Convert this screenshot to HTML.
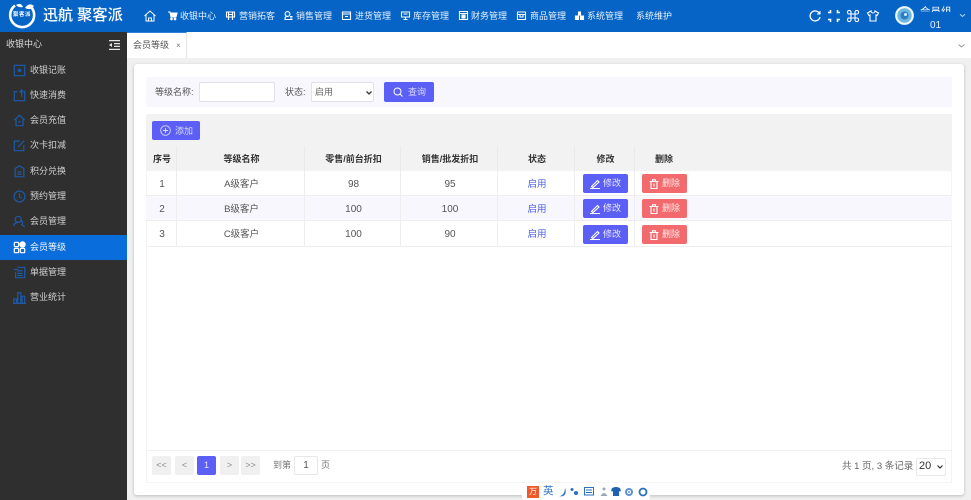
<!DOCTYPE html>
<html lang="zh"><head><meta charset="utf-8"><title>会员等级</title>
<style>
*{box-sizing:border-box}
html,body{margin:0;padding:0;width:971px;height:500px;overflow:hidden;background:#f0f0f0;font-family:"Liberation Sans","Noto Sans CJK SC",sans-serif;color:#444}
#w{position:absolute;left:0;top:0;width:971px;height:500px;overflow:hidden;filter:blur(.35px)}
.a{position:absolute;white-space:nowrap}
svg{position:absolute;overflow:visible;fill:none}
.n{top:10px;font-size:9px;line-height:13px;color:#e8f1fb}
.nav svg{top:11px;width:9px;height:9px;stroke:#fff;stroke-width:1.1}
.s{left:30px;font-size:9px;line-height:13px;color:#d0d0d0}
.sv{left:13px;width:13px;height:13px;stroke:#1c5aa6;stroke-width:1.4}
.th{top:146px;height:25px;background:#f2f2f2;font-size:9px;line-height:26px;color:#333;text-align:center;font-weight:700;border-right:1px solid #e9e9e9;padding-left:2px}
.td{height:25px;font-size:9.500px;line-height:27px;color:#555;text-align:center;border-right:1px solid #eeeeee;border-bottom:1px solid #eeeeee;padding-left:2px}
.num{font-size:10px}
.b{width:45px;height:19px;border-radius:2px;color:#e9e9ff;font-size:9px;line-height:19px;padding-left:19px}
.m{left:583px;background:#5c5ff5}.d{left:642px;background:#f26a6d;color:#ffe9e9}
.b svg{left:7px;top:5px;width:10px;height:10px;stroke:#fff;stroke-width:1.1}
.p{top:456px;width:19px;height:19px;background:#f0f0f0;border-radius:2px;color:#8a8a8a;font-size:9px;line-height:19px;text-align:center}
</style></head><body><div id="w">

<!-- Top bar -->
<div class="a" style="left:0;top:0;width:971px;height:32px;background:#0564c6"></div>
<svg style="left:8px;top:2px;width:28px;height:27px" viewBox="0 0 28 27"><path d="M7 3.500A12 12 0 1 0 23 5" stroke="#fff" stroke-width="2.600"/><path d="M8 3q5-3 7 2-4 1-7-2zM17 6q4-6 9-2-3 5-9 2z" fill="#fff"/></svg>
<div class="a" style="left:13px;top:11px;font-size:5.500px;line-height:9px;color:#fff;letter-spacing:.5px;font-weight:700">聚客派</div>
<div class="a" style="left:43px;top:6px;font-size:15px;line-height:20px;color:#fff;font-weight:500">迅航</div>
<div class="a" style="left:77px;top:6px;font-size:15.300px;line-height:20px;color:#fff;font-weight:500">聚客派</div>

<div class="nav">
<svg style="left:144px;top:10px;width:12px;height:12px;stroke:#fff;stroke-width:1" viewBox="0 0 12 12"><path d="M0.500 6L6 1l5.500 5M2 5v6h8V5M4.500 11V8h3v3"/></svg>
<svg style="left:168px" viewBox="0 0 9 9"><path d="M0 1h2l1 5h5l1-4H2.500" fill="#fff"/><circle cx="3.500" cy="8" r=".8" fill="#fff"/><circle cx="7" cy="8" r=".8" fill="#fff"/></svg>
<div class="a n" style="left:180px">收银中心</div>
<svg style="left:226px" viewBox="0 0 9 9"><path d="M.5 1h8v5h-8zM2.500 1v8M6.500 1v8M2.500 3.500h4"/></svg>
<div class="a n" style="left:239px">营销拓客</div>
<svg style="left:284px" viewBox="0 0 9 9"><circle cx="3.500" cy="3" r="2.400"/><path d="M.5 8.500h8M6 5.500h2.500M6 7h2.500M1 8c0-2 1-2.800 2.500-2.800"/></svg>
<div class="a n" style="left:296px">销售管理</div>
<svg style="left:342px" viewBox="0 0 9 9"><path d="M.5 1h8v7.500h-8zM.5 3h8M3 5.500h3"/></svg>
<div class="a n" style="left:355px">进货管理</div>
<svg style="left:401px" viewBox="0 0 9 9"><path d="M.5 1h8v5h-8zM4.500 6v2.500M2.500 8.500h4M2.500 3h4"/></svg>
<div class="a n" style="left:413px">库存管理</div>
<svg style="left:459px" viewBox="0 0 9 9"><path d="M.5.500h8v8h-8zM.5 2.500h8"/><rect x="3" y="4" width="3" height="3" fill="#fff"/></svg>
<div class="a n" style="left:471px">财务管理</div>
<svg style="left:517px" viewBox="0 0 9 9"><path d="M.5 1h8v7.500h-8zM.5 3.500h8M3 3.500v2.500h3V3.500"/></svg>
<div class="a n" style="left:530px">商品管理</div>
<svg style="left:575px" viewBox="0 0 9 9"><path d="M3.500 1h2v3h-2zM.5 5h3v3.500h-3zM5.500 5h3v3.500h-3z" fill="#fff"/></svg>
<div class="a n" style="left:587px">系统管理</div>
<div class="a n" style="left:636px">系统维护</div>
</div>

<svg style="left:809px;top:10px;width:12px;height:12px;stroke:#fff;stroke-width:1.300" viewBox="0 0 12 12"><path d="M10.500 3.500A5 5 0 1 0 11 7"/><path d="M11 1v3H8" stroke-width="1"/></svg>
<svg style="left:828px;top:10px;width:12px;height:12px;stroke:#fff;stroke-width:1.600" viewBox="0 0 12 12"><path d="M0 2.500h2.500V0M9.500 0v2.500H12M12 9.500H9.500V12M2.500 12V9.500H0" transform="rotate(0 6 6)"/></svg>
<svg style="left:847px;top:10px;width:12px;height:12px;stroke:#fff;stroke-width:1.100" viewBox="0 0 12 12"><path d="M4 4h4v4H4zM4 4H2.200A1.800 1.800 0 1 1 4 2.200zM8 4V2.200A1.800 1.800 0 1 1 9.800 4zM8 8h1.800A1.800 1.800 0 1 1 8 9.800zM4 8v1.800A1.800 1.800 0 1 1 2.200 8z"/></svg>
<svg style="left:867px;top:10px;width:12px;height:12px;stroke:#fff;stroke-width:1.100" viewBox="0 0 12 12"><path d="M4 1L.5 3l1.500 2.500L3 5v6h6V5l1 .5L11.500 3 8 1a2 2 0 0 1-4 0z"/></svg>
<svg style="left:895px;top:6px;width:19px;height:19px" viewBox="0 0 19 19"><circle cx="9.500" cy="9.500" r="8.300" fill="#6db6e0" stroke="#eef7fc" stroke-width="2.200"/><circle cx="9.500" cy="9.500" r="4" fill="#2a7fc4"/><circle cx="10.500" cy="8.500" r="1.500" fill="#d9eef9"/></svg>
<div class="a" style="left:920px;top:4px;width:32px;height:8px;overflow:hidden;font-size:10.500px;line-height:16px;color:#fff">会员组</div>
<div class="a" style="left:930px;top:20px;font-size:10px;line-height:12px;color:#e8f1fb;height:8px;overflow:hidden">01</div>
<svg style="left:960px;top:14px;width:5px;height:3px;stroke:#bcd9f4;stroke-width:1" viewBox="0 0 5 3"><path d="M0 .3L2.500 2.500 5 .3"/></svg>

<!-- Sidebar -->
<div class="a" style="left:0;top:32px;width:127px;height:468px;background:#2f2f2f"></div>
<div class="a" style="left:6px;top:38px;font-size:9px;line-height:13px;color:#ddd">收银中心</div>
<svg style="left:109px;top:40px;width:11px;height:10px;stroke:#e4e4e4;stroke-width:1.200" viewBox="0 0 11 10"><path d="M0 .6h11M5 3.600h6M5 6.400h6M0 9.400h11"/><path d="M3 3L0 5l3 2z" fill="#e4e4e4" stroke="none"/></svg>

<div class="a" style="left:0;top:235px;width:127px;height:25px;background:#0a6ddc"></div>

<svg class="sv" style="top:64px" viewBox="0 0 15 15"><rect x="1.500" y="1.500" width="12" height="12"/><rect x="5.500" y="5.500" width="4" height="3.500" fill="#1c5aa6" stroke="none"/></svg>
<div class="a s" style="top:64px">收银记账</div>
<svg class="sv" style="top:89px" viewBox="0 0 15 15"><path d="M5 3H1.500v10.500h12V2M10 1v8M7.500 4L10 1l2 3"/></svg>
<div class="a s" style="top:89px">快速消费</div>
<svg class="sv" style="top:114px" viewBox="0 0 15 15"><path d="M1.500 7L7.500 1.500 13.500 7M3.500 6v7.500h8V6M6 9h3"/></svg>
<div class="a s" style="top:114px">会员充值</div>
<svg class="sv" style="top:139px" viewBox="0 0 15 15"><path d="M8 2.500H1.500v11h11V7M6 9l7-7"/></svg>
<div class="a s" style="top:139px">次卡扣减</div>
<svg class="sv" style="top:165px" viewBox="0 0 15 15"><path d="M7.500 1l5 3v9.500h-10V4zM5 8h5M5 10.500h5"/></svg>
<div class="a s" style="top:165px">积分兑换</div>
<svg class="sv" style="top:190px" viewBox="0 0 15 15"><circle cx="7.500" cy="7.500" r="6.300"/><path d="M7.500 4v4l2.500 1.500"/></svg>
<div class="a s" style="top:190px">预约管理</div>
<svg class="sv" style="top:215px" viewBox="0 0 15 15"><circle cx="6" cy="5" r="3.500"/><path d="M1 13c0-3 2-4.500 5-4.500M9 6a3 3 0 0 1 1 5l3.500 2.500"/></svg>
<div class="a s" style="top:215px">会员管理</div>
<svg class="sv" style="top:241px;stroke:#fff" viewBox="0 0 15 15"><rect x="1.500" y="1.500" width="5" height="5" rx="1"/><circle cx="11" cy="4" r="3" fill="#fff"/><rect x="1.500" y="8.500" width="5" height="5" rx="1"/><rect x="8.500" y="8.500" width="5" height="5" rx="1"/></svg>
<div class="a s" style="top:241px;color:#f2f7ff">会员等级</div>
<svg class="sv" style="top:266px" viewBox="0 0 15 15"><path d="M5 1.500h8.500v12H3V7M1 4h5M5 5.500h6M5 8.500h6M5 11h6"/></svg>
<div class="a s" style="top:266px">单据管理</div>
<svg class="sv" style="top:291px" viewBox="0 0 15 15"><path d="M1 14V9h3v5M5.500 14V2h3.500v12M10.500 14V6h3v8M0 14.300h15"/></svg>
<div class="a s" style="top:291px">营业统计</div>

<!-- Tabs -->
<div class="a" style="left:127px;top:32px;width:844px;height:26px;background:#fff"></div>
<div class="a" style="left:127px;top:32px;width:60px;height:26px;background:#fff;border-top:1px solid #2f80d8;border-right:1px solid #e6e6e6"></div>
<div class="a" style="left:133px;top:39px;font-size:9px;line-height:13px;color:#555">会员等级</div>
<div class="a" style="left:176px;top:39px;font-size:8px;line-height:13px;color:#777">×</div>
<svg style="left:958px;top:44px;width:7px;height:4px;stroke:#999;stroke-width:1" viewBox="0 0 7 4"><path d="M.5.500L3.500 3 6.500.500"/></svg>

<!-- Card -->
<div class="a" style="left:134px;top:64px;width:830px;height:431px;background:#fff;border-radius:3px;box-shadow:0 1px 3px rgba(0,0,0,.22)"></div>

<!-- Search -->
<div class="a" style="left:146px;top:77px;width:806px;height:30px;background:#f7f7fd;border-radius:2px"></div>
<div class="a" style="left:155px;top:86px;font-size:9px;line-height:13px;color:#555">等级名称:</div>
<div class="a" style="left:199px;top:82px;width:76px;height:20px;background:#fff;border:1px solid #e2e2ea;border-radius:2px"></div>
<div class="a" style="left:285px;top:86px;font-size:9px;line-height:13px;color:#555">状态:</div>
<div class="a" style="left:311px;top:82px;width:63px;height:20px;background:#fff;border:1px solid #e2e2ea;border-radius:2px"></div>
<div class="a" style="left:315px;top:86px;font-size:9px;line-height:13px;color:#666">启用</div>
<svg style="left:366px;top:91px;width:6px;height:4px;stroke:#333;stroke-width:1.300" viewBox="0 0 6 4"><path d="M.5.500L3 3 5.500.500"/></svg>
<div class="a" style="left:384px;top:82px;width:50px;height:20px;background:#5c5ff5;border-radius:2px"></div>
<svg style="left:393px;top:87px;width:10px;height:10px;stroke:#fff;stroke-width:1" viewBox="0 0 10 10"><circle cx="4.500" cy="4.500" r="3.500"/><path d="M7 7l2.500 2.500"/></svg>
<div class="a" style="left:408px;top:86px;font-size:9px;line-height:13px;color:#dcdcff">查询</div>

<!-- Table frame -->
<div class="a" style="left:146px;top:114px;width:806px;height:369px;border:1px solid #f4f4f4;border-top:0"></div>
<div class="a" style="left:146px;top:114px;width:806px;height:32px;background:#f2f2f2"></div>
<div class="a" style="left:152px;top:121px;width:48px;height:19px;background:#5c5ff5;border-radius:2px"></div>
<svg style="left:160px;top:125px;width:11px;height:11px;stroke:#dcdcff;stroke-width:.9" viewBox="0 0 11 11"><circle cx="5.500" cy="5.500" r="4.800"/><path d="M3 5.500h5M5.500 3v5"/></svg>
<div class="a" style="left:175px;top:125px;font-size:9px;line-height:13px;color:#dcdcff">添加</div>

<div class="a th" style="left:146px;width:31px">序号</div>
<div class="a th" style="left:177px;width:128px">等级名称</div>
<div class="a th" style="left:305px;width:96px">零售/前台折扣</div>
<div class="a th" style="left:401px;width:97px">销售/批发折扣</div>
<div class="a th" style="left:498px;width:77px">状态</div>
<div class="a th" style="left:575px;width:60px">修改</div>
<div class="a th" style="left:635px;width:317px;border:0;text-align:left;padding-left:20px">删除</div>

<div class="a" style="left:146px;top:196px;width:806px;height:25px;background:#f7f7fd"></div>

<div class="a td num" style="left:146px;top:171px;width:31px">1</div>
<div class="a td" style="left:177px;top:171px;width:128px">A级客户</div>
<div class="a td num" style="left:305px;top:171px;width:96px">98</div>
<div class="a td num" style="left:401px;top:171px;width:97px">95</div>
<div class="a td" style="left:498px;top:171px;width:77px;color:#4d5fe0">启用</div>
<div class="a td" style="left:575px;top:171px;width:60px"></div>
<div class="a td" style="left:635px;top:171px;width:317px;border-right:0"></div>

<div class="a td num" style="left:146px;top:196px;width:31px">2</div>
<div class="a td" style="left:177px;top:196px;width:128px">B级客户</div>
<div class="a td num" style="left:305px;top:196px;width:96px">100</div>
<div class="a td num" style="left:401px;top:196px;width:97px">100</div>
<div class="a td" style="left:498px;top:196px;width:77px;color:#4d5fe0">启用</div>
<div class="a td" style="left:575px;top:196px;width:60px"></div>
<div class="a td" style="left:635px;top:196px;width:317px;border-right:0"></div>

<div class="a td num" style="left:146px;top:221px;width:31px;height:26px">3</div>
<div class="a td" style="left:177px;top:221px;width:128px;height:26px">C级客户</div>
<div class="a td num" style="left:305px;top:221px;width:96px;height:26px">100</div>
<div class="a td num" style="left:401px;top:221px;width:97px;height:26px">90</div>
<div class="a td" style="left:498px;top:221px;width:77px;height:26px;color:#4d5fe0">启用</div>
<div class="a td" style="left:575px;top:221px;width:60px;height:26px"></div>
<div class="a td" style="left:635px;top:221px;width:317px;height:26px;border-right:0"></div>

<div class="a b m" style="top:174px"><svg viewBox="0 0 10 10"><path d="M0 9.500h10M1.500 7.500L7.500 1.500l1.500 1.500-6 5.500z"/></svg><span style="margin-left:1px">修改</span></div>
<div class="a b d" style="top:174px"><svg viewBox="0 0 10 10"><path d="M.5 2.500h9M2 2.500v7h6v-7M3.500 2.500V.8h3v1.700M5 4.500v3"/></svg><span style="margin-left:1px">删除</span></div>
<div class="a b m" style="top:199px"><svg viewBox="0 0 10 10"><path d="M0 9.500h10M1.500 7.500L7.500 1.500l1.500 1.500-6 5.500z"/></svg><span style="margin-left:1px">修改</span></div>
<div class="a b d" style="top:199px"><svg viewBox="0 0 10 10"><path d="M.5 2.500h9M2 2.500v7h6v-7M3.500 2.500V.8h3v1.700M5 4.500v3"/></svg><span style="margin-left:1px">删除</span></div>
<div class="a b m" style="top:225px"><svg viewBox="0 0 10 10"><path d="M0 9.500h10M1.500 7.500L7.500 1.500l1.500 1.500-6 5.500z"/></svg><span style="margin-left:1px">修改</span></div>
<div class="a b d" style="top:225px"><svg viewBox="0 0 10 10"><path d="M.5 2.500h9M2 2.500v7h6v-7M3.500 2.500V.8h3v1.700M5 4.500v3"/></svg><span style="margin-left:1px">删除</span></div>

<!-- Pagination -->
<div class="a" style="left:146px;top:450px;width:806px;height:1px;background:#f0f0f0"></div>
<div class="a p" style="left:152px">&lt;&lt;</div>
<div class="a p" style="left:175px">&lt;</div>
<div class="a p" style="left:197px;background:#5c5ff5;color:#e6e6ff">1</div>
<div class="a p" style="left:220px">&gt;</div>
<div class="a p" style="left:241px">&gt;&gt;</div>
<div class="a" style="left:273px;top:459px;font-size:9px;line-height:13px;color:#777">到第</div>
<div class="a" style="left:294px;top:456px;width:24px;height:19px;border:1px solid #e8e8e8;border-radius:2px;font-size:10px;line-height:17px;text-align:center;color:#555">1</div>
<div class="a" style="left:321px;top:459px;font-size:9px;line-height:13px;color:#777">页</div>

<div class="a" style="left:842px;top:460px;font-size:9.500px;line-height:13px;color:#666">共 1 页, 3 条记录</div>
<div class="a" style="left:916px;top:458px;width:30px;height:18px;border:1px solid #e8e8e8;border-radius:2px;background:#fff"></div>
<div class="a" style="left:919px;top:460px;font-size:11px;line-height:13px;color:#333">20</div>
<svg style="left:937px;top:465px;width:6px;height:4px;stroke:#333;stroke-width:1.200" viewBox="0 0 6 4"><path d="M.5.500L3 3 5.500.500"/></svg>

<!-- IME bar -->
<div class="a" style="left:522px;top:483px;width:128px;height:17px;background:#fff;border-radius:2px"></div>
<div class="a" style="left:527px;top:486px;width:12px;height:12px;background:#f0592a;color:#fff;font-size:8px;line-height:12px;text-align:center">万</div>
<div class="a" style="left:543px;top:485px;font-size:10.500px;line-height:13px;color:#2a6fc0">英</div>
<svg style="left:559px;top:486px;width:90px;height:12px" viewBox="0 0 90 12"><path d="M0 10c4 0 6-4 6-8 2 4 0 10-6 8z" fill="#2a6fc0"/><circle cx="13" cy="3.500" r="1.500" fill="#2a6fc0"/><circle cx="17" cy="7" r="2" fill="#2a6fc0"/><rect x="25.500" y="1.500" width="9" height="7.500" stroke="#2a6fc0"/><path d="M27 4h6M27 6.500h6" stroke="#2a6fc0"/><circle cx="45" cy="3" r="1.500" fill="#9aa8b5"/><path d="M41.500 10q3.500-6 7 0z" fill="#9aa8b5"/><path d="M53 2l3-1h2l3 1 1 3-2 .5V10h-6V5.500L52 5z" fill="#1f62b4"/><circle cx="70" cy="6" r="4" fill="#5c93d0"/><circle cx="70" cy="6" r="1.500" stroke="#fff"/><circle cx="84" cy="6" r="3.500" stroke="#2a6fc0" stroke-width="1.800"/></svg>
</div></body></html>
